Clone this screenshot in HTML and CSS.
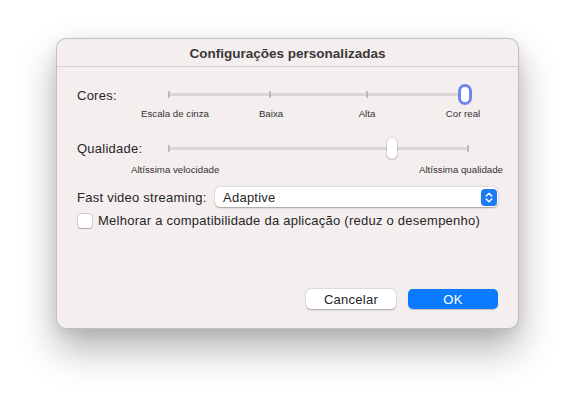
FILE: index.html
```html
<!DOCTYPE html>
<html lang="pt">
<head>
<meta charset="utf-8">
<link rel="stylesheet" href="styles.css">
</head>
<body>
<div class="dialog">
  <div class="titlebar">Configurações personalizadas</div>
  <div class="content">
    <div class="row slider-row cores">
      <div class="label">Cores:</div>
      <div class="slider">
        <div class="track"></div>
        <span class="tick" style="left:0%"></span>
        <span class="tick" style="left:34%"></span>
        <span class="tick" style="left:67%"></span>
        <span class="tick" style="left:100%"></span>
        <span class="knob knob-blue" style="left:100%"></span>
      </div>
    </div>
    <div class="scale4">
      <span>Escala de cinza</span>
      <span>Baixa</span>
      <span>Alta</span>
      <span>Cor real</span>
    </div>
    <div class="row slider-row qualidade">
      <div class="label">Qualidade:</div>
      <div class="slider wide">
        <div class="track"></div>
        <span class="tick" style="left:0%"></span>
        <span class="tick" style="left:100%"></span>
        <span class="knob knob-white" style="left:74.5%"></span>
      </div>
    </div>
    <div class="scale2">
      <span>Altíssima velocidade</span>
      <span>Altíssima qualidade</span>
    </div>
    <div class="row select-row">
      <div class="label">Fast video streaming:</div>
      <div class="select">
        <span class="select-value">Adaptive</span>
        <span class="stepper">
          <svg width="16" height="17" viewBox="0 0 16 17">
            <path d="M5.2 7 L8 4.3 L10.8 7" fill="none" stroke="#fff" stroke-width="1.4" stroke-linecap="round" stroke-linejoin="round"/>
            <path d="M5.2 10 L8 12.7 L10.8 10" fill="none" stroke="#fff" stroke-width="1.4" stroke-linecap="round" stroke-linejoin="round"/>
          </svg>
        </span>
      </div>
    </div>
    <div class="row check-row">
      <span class="checkbox"></span>
      <span class="check-label">Melhorar a compatibilidade da aplicação (reduz o desempenho)</span>
    </div>
    <div class="buttons">
      <button class="btn btn-cancel">Cancelar</button>
      <button class="btn btn-ok">OK</button>
    </div>
  </div>
</div>
</body>
</html>
```

FILE: styles.css
```css
* { box-sizing: border-box; }
html, body {
  margin: 0;
  padding: 0;
  background: #ffffff;
}
body {
  width: 575px;
  height: 403px;
  overflow: hidden;
  display: flex;
  justify-content: center;
  align-items: flex-start;
  padding-top: 38px;
  font-family: "Liberation Sans", Arial, sans-serif;
  color: #262626;
}
.dialog {
  width: 463px;
  height: 291px;
  background: #f4eeee;
  border: 1px solid rgba(0, 0, 0, 0.2);
  border-radius: 10px;
  box-shadow: 0 20px 38px rgba(0, 0, 0, 0.3), 0 4px 14px rgba(0, 0, 0, 0.08);
  display: flex;
  flex-direction: column;
}
.titlebar {
  height: 28px;
  flex: none;
  border-bottom: 1px solid #d6d0d0;
  display: flex;
  align-items: center;
  justify-content: center;
  font-size: 13.5px;
  font-weight: bold;
  color: #3b3838;
  padding-top: 1px;
}
.content {
  flex: 1;
  display: flex;
  flex-direction: column;
  padding: 17px 20px 19px 20px;
}
.row {
  display: flex;
  align-items: center;
}
.label,
.select-value,
.check-label,
.btn {
  font-size: 13px;
  letter-spacing: 0.25px;
}
.slider-row {
  height: 21px;
}
.slider-row .label {
  width: 92px;
  flex: none;
}
.slider-row.cores .label { padding-top: 2px; }
.slider {
  position: relative;
  width: 296px;
  height: 21px;
}
.slider.wide { width: 299px; }
.track {
  position: absolute;
  left: 0;
  right: 0;
  top: 9px;
  height: 3px;
  border-radius: 2px;
  background: #dcd7d7;
}
.tick {
  position: absolute;
  top: 7px;
  width: 2px;
  height: 7px;
  margin-left: -1px;
  border-radius: 1px;
  background: #bdb7b7;
}
.knob {
  position: absolute;
  top: 0;
  height: 21px;
  border-radius: 8px;
  background: #ffffff;
}
.knob-blue {
  width: 14px;
  margin-left: -7px;
  border: 3px solid #7286ef;
}
.knob-white {
  width: 10px;
  margin-left: -5px;
  border-radius: 5px;
  box-shadow: 0 0.5px 2px rgba(0, 0, 0, 0.35), 0 0 0 0.5px rgba(0, 0, 0, 0.08);
}
.scale4 {
  display: grid;
  grid-template-columns: repeat(4, 96px);
  margin-top: 3px;
  margin-left: 50px;
  font-size: 9.7px;
  line-height: 12px;
  color: #333;
  text-align: center;
}
.qualidade { margin-top: 18px; }
.scale2 {
  display: flex;
  justify-content: space-between;
  margin: 5px -5px 0 54px;
  font-size: 9.7px;
  line-height: 12px;
  color: #333;
}
.select-row {
  margin-top: 11px;
  height: 20px;
}
.select-row .label {
  width: 138px;
  flex: none;
}
.select {
  width: 284px;
  height: 20px;
  background: #ffffff;
  border-radius: 5px;
  box-shadow: 0 0.5px 1.5px rgba(0, 0, 0, 0.3), 0 0 0 0.5px rgba(0, 0, 0, 0.06);
  display: flex;
  align-items: center;
  justify-content: space-between;
  padding: 0 1px 0 8px;
}
.stepper {
  width: 16px;
  height: 17px;
  border-radius: 4px;
  background: #1b7bf4;
  display: flex;
}
.check-row {
  margin-top: 6px;
  height: 15px;
}
.checkbox {
  width: 14px;
  height: 14px;
  margin-left: 1px;
  border-radius: 3px;
  background: #ffffff;
  box-shadow: 0 0 0 0.5px rgba(0, 0, 0, 0.25), 0 0.5px 1px rgba(0, 0, 0, 0.2);
  flex: none;
}
.check-label {
  margin-left: 6px;
}
.buttons {
  margin-top: auto;
  display: flex;
  justify-content: flex-end;
  gap: 12px;
}
.btn {
  width: 90px;
  height: 20px;
  border: none;
  border-radius: 5px;
  font-family: "Liberation Sans", Arial, sans-serif;
  padding: 0;
}
.btn-cancel {
  background: #ffffff;
  color: #262626;
  box-shadow: 0 0.5px 1.5px rgba(0, 0, 0, 0.3), 0 0 0 0.5px rgba(0, 0, 0, 0.06);
}
.btn-ok {
  background: #0a7bff;
  color: #ffffff;
  box-shadow: 0 0.5px 1px rgba(0, 0, 0, 0.2);
}
```
